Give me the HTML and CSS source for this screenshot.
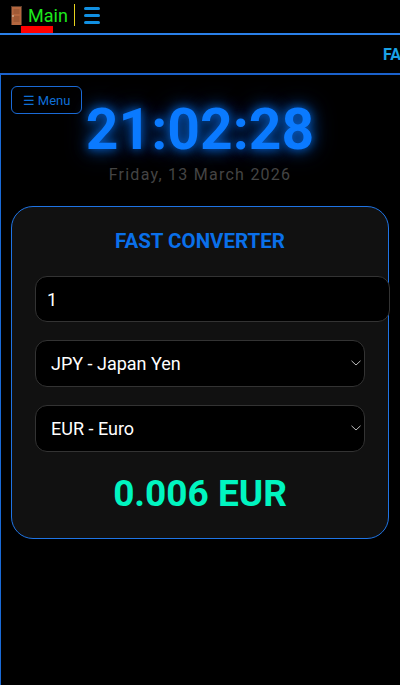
FILE: index.html
```html
<!DOCTYPE html>
<html lang="en">
<head>
    <meta charset="UTF-8">
    <meta name="viewport" content="width=device-width, initial-scale=1.0">
    <title>Fast Converter</title>
    <link rel="stylesheet" href="styles.css">
</head>
<body>
    <header class="topbar">
        <svg class="door" viewBox="0 0 11 19" width="11" height="19">
            <rect width="11" height="19" fill="#5a3a28"/>
            <rect x="1" y="1" width="9" height="18" fill="#b5673f"/>
            <rect x="2.5" y="3" width="6" height="5" fill="#a05a36"/>
            <rect x="2.5" y="10" width="6" height="6" fill="#a05a36"/>
            <circle cx="2" cy="10" r="0.8" fill="#e8e0c8"/>
        </svg>
        <span class="active-tab">Main</span>
        <span class="divider"></span>
        <svg class="burger" viewBox="0 0 16 17" width="16" height="17">
            <rect y="0" width="16" height="3" rx="1.5"/>
            <rect y="7" width="16" height="3" rx="1.5"/>
            <rect y="14" width="16" height="3" rx="1.5"/>
        </svg>
    </header>

    <div class="ticker">
        <span>FAST CONVERTER</span>
    </div>

    <main class="content">
        <button type="button" class="menu-btn">☰ Menu</button>

        <div class="clock">21:02:28</div>
        <div class="date">Friday, 13 March 2026</div>

        <section class="card">
            <h2 class="card-title">FAST CONVERTER</h2>
            <input type="text" class="amount" value="1">
            <div class="select-wrap">
                <select class="currency">
                    <option>JPY - Japan Yen</option>
                </select>
                <svg class="chevron" viewBox="0 0 10 6" width="10" height="6"><path d="M.5.8 5 5 9.500.8"/></svg>
            </div>
            <div class="select-wrap">
                <select class="currency">
                    <option>EUR - Euro</option>
                </select>
                <svg class="chevron" viewBox="0 0 10 6" width="10" height="6"><path d="M.5.8 5 5 9.500.8"/></svg>
            </div>
            <div class="result">0.006 EUR</div>
        </section>
    </main>
</body>
</html>
```

FILE: styles.css
```css
* {
    box-sizing: border-box;
}
html, body {
    height: 100%;
}
body {
    margin: 0;
    background-color: #000;
    color: #fff;
    font-family: Roboto, "Liberation Sans", sans-serif;
    overflow: hidden;
}
.topbar {
    position: relative;
    display: flex;
    align-items: center;
    height: 35px;
    padding: 0 0 3px 11px;
    border-bottom: 2px solid #2a80e8;
}
.door {
    margin-top: 1px;
}
.active-tab {
    position: relative;
    margin-left: 6px;
    font-size: 18px;
    color: #1de91d;
}
.active-tab::after {
    content: "";
    position: absolute;
    left: -7px;
    bottom: -7px;
    width: 32px;
    height: 7px;
    background-color: #f00;
}
.divider {
    width: 1px;
    height: 22px;
    margin-left: 6px;
    background-color: #e6d21e;
}
.burger {
    margin-left: 9px;
    fill: #1190e2;
}
.ticker {
    height: 40px;
    padding-left: 383px;
    border-bottom: 2px solid #1b62cc;
    line-height: 39px;
    font-size: 16px;
    font-weight: bold;
    color: #1aa2e6;
    white-space: nowrap;
    overflow: hidden;
}
.content {
    position: relative;
    height: 610px;
    padding: 20px 11px 0;
    border-left: 1px solid #1a6ad6;
}
.menu-btn {
    position: absolute;
    left: 10px;
    top: 11px;
    width: 71px;
    height: 28px;
    padding: 0;
    background: transparent;
    border: 1px solid #1a6ad6;
    border-radius: 6px;
    color: #0f6fd6;
    font-family: inherit;
    font-size: 13px;
}
.clock {
    margin-left: -1px;
    text-align: center;
    font-size: 57px;
    font-weight: bold;
    line-height: 70px;
    color: #0a7aff;
    text-shadow: 0 0 8px rgba(10, 122, 255, 0.6), 0 0 16px rgba(10, 110, 240, 0.6), 0 0 26px rgba(10, 95, 208, 0.5);
}
.date {
    margin-left: -1px;
    text-align: center;
    font-size: 16px;
    line-height: 20px;
    letter-spacing: 1.25px;
    color: #444;
}
.card {
    width: 378px;
    height: 333px;
    margin-top: 21px;
    margin-left: -1px;
    padding: 21px 23px 0;
    background-color: #111;
    border: 1px solid #1f74e4;
    border-radius: 22px;
}
.card-title {
    margin: 0 0 22px;
    text-align: center;
    font-size: 20.5px;
    line-height: 26px;
    color: #0a70ea;
}
.amount {
    display: block;
    width: 355px;
    height: 46px;
    padding: 0 11px;
    background-color: #000;
    border: 1px solid #333;
    border-radius: 12px;
    color: #fff;
    font-family: inherit;
    font-size: 18px;
}
.select-wrap {
    position: relative;
    margin-top: 18px;
}
.currency {
    display: block;
    width: 100%;
    height: 47px;
    padding: 0 15px;
    appearance: none;
    background-color: #000;
    border: 1px solid #333;
    border-radius: 12px;
    color: #fff;
    font-family: inherit;
    font-size: 18px;
}
.chevron {
    position: absolute;
    right: 4px;
    top: 20px;
    fill: none;
    stroke: #bbb;
    stroke-width: 1;
}
.result {
    margin-top: 21px;
    text-align: center;
    font-size: 37px;
    font-weight: bold;
    line-height: 42px;
    color: #00f5c0;
}
```
